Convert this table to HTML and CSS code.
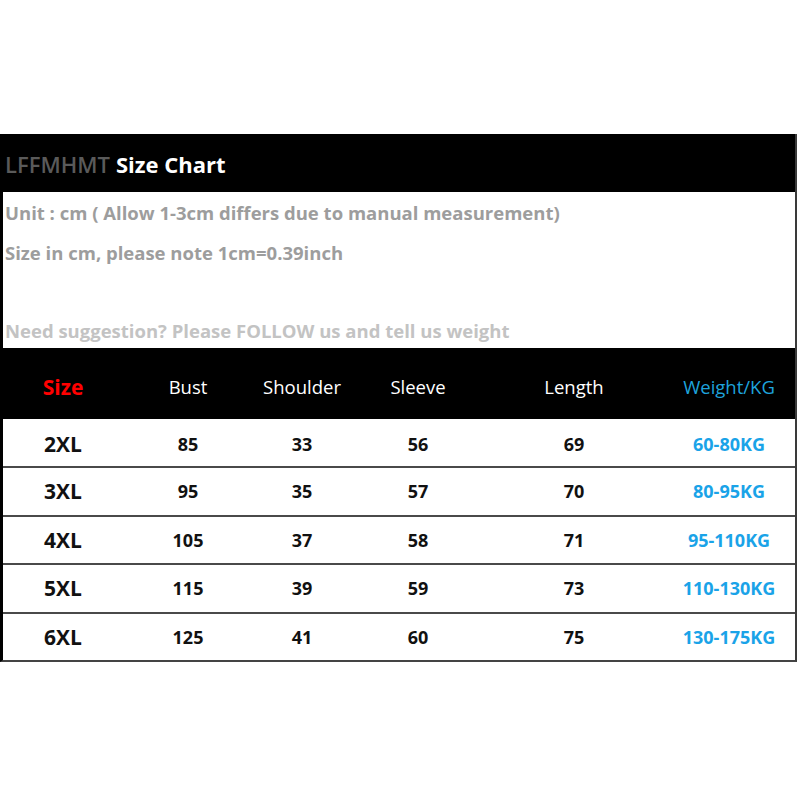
FILE: index.html
```html
<!DOCTYPE html>
<html>
<head>
<meta charset="utf-8">
<link rel="stylesheet" href="styles.css">
</head>
<body>
<div class="chart">
  <div class="title"><span class="brand">LFFMHMT</span> <span class="title-main">Size Chart</span></div>
  <div class="notes">
    <p class="note">Unit : cm ( Allow 1-3cm differs due to manual measurement)</p>
    <p class="note">Size in cm, please note 1cm=0.39inch</p>
    <p class="note light">Need suggestion? Please FOLLOW us and tell us weight</p>
  </div>
  <div class="row head">
    <div class="cell size-h">Size</div>
    <div class="cell">Bust</div>
    <div class="cell">Shoulder</div>
    <div class="cell">Sleeve</div>
    <div class="cell">Length</div>
    <div class="cell weight-h">Weight/KG</div>
  </div>
  <div class="row data">
    <div class="cell size">2XL</div><div class="cell">85</div><div class="cell">33</div><div class="cell">56</div><div class="cell">69</div><div class="cell weight">60-80KG</div>
  </div>
  <div class="row data">
    <div class="cell size">3XL</div><div class="cell">95</div><div class="cell">35</div><div class="cell">57</div><div class="cell">70</div><div class="cell weight">80-95KG</div>
  </div>
  <div class="row data">
    <div class="cell size">4XL</div><div class="cell">105</div><div class="cell">37</div><div class="cell">58</div><div class="cell">71</div><div class="cell weight">95-110KG</div>
  </div>
  <div class="row data">
    <div class="cell size">5XL</div><div class="cell">115</div><div class="cell">39</div><div class="cell">59</div><div class="cell">73</div><div class="cell weight">110-130KG</div>
  </div>
  <div class="row data">
    <div class="cell size">6XL</div><div class="cell">125</div><div class="cell">41</div><div class="cell">60</div><div class="cell">75</div><div class="cell weight">130-175KG</div>
  </div>
</div>
</body>
</html>
```
FILE: styles.css
```css
html, body {
  margin: 0;
  padding: 0;
  background: #ffffff;
}
body {
  font-family: "Open Sans", "Liberation Sans", sans-serif;
  padding-top: 134px;
}
.chart {
  width: 792px;
  border-left: 3px solid #000;
  border-right: 2px solid #3a3a3a;
  border-bottom: 2px solid #444;
}
.title {
  background: #000;
  height: 58px;
  display: flex;
  align-items: center;
  padding-left: 2px;
  padding-top: 2px;
  box-sizing: border-box;
  font-size: 22px;
  gap: 6px;
}
.brand {
  color: #5a5a5a;
  font-weight: 600;
}
.title-main {
  color: #fff;
  font-weight: 700;
}
.notes {
  height: 156px;
  padding-left: 2px;
  display: flex;
  flex-direction: column;
}
.note {
  margin: 0;
  font-size: 18.5px;
  font-weight: 700;
  color: #9d9d9d;
  line-height: 24px;
}
.note:first-child { margin-top: 9px; }
.note:nth-child(2) { margin-top: 16px; }
.note.light {
  margin-top: 54px;
  color: #c3c3c3;
}
.row {
  display: grid;
  grid-template-columns: 120px 130px 98px 134px 178px 1fr;
  align-items: center;
}
.cell {
  text-align: center;
}
.head {
  background: #000;
  height: 71px;
  color: #fff;
  font-size: 18.5px;
  padding-top: 6px;
  box-sizing: border-box;
}
.size-h {
  color: #f00;
  font-weight: 700;
  font-size: 21px;
}
.weight-h {
  color: #1ea3dc;
}
.data {
  height: 47px;
  font-size: 18px;
  font-weight: 700;
  color: #111;
  padding-top: 3px;
  box-sizing: border-box;
}
.data + .data {
  border-top: 2px solid #4a4a4a;
  height: 48.5px;
  padding-top: 0;
}
.size {
  font-size: 21px;
}
.weight {
  color: #1aa3e8;
}
```
